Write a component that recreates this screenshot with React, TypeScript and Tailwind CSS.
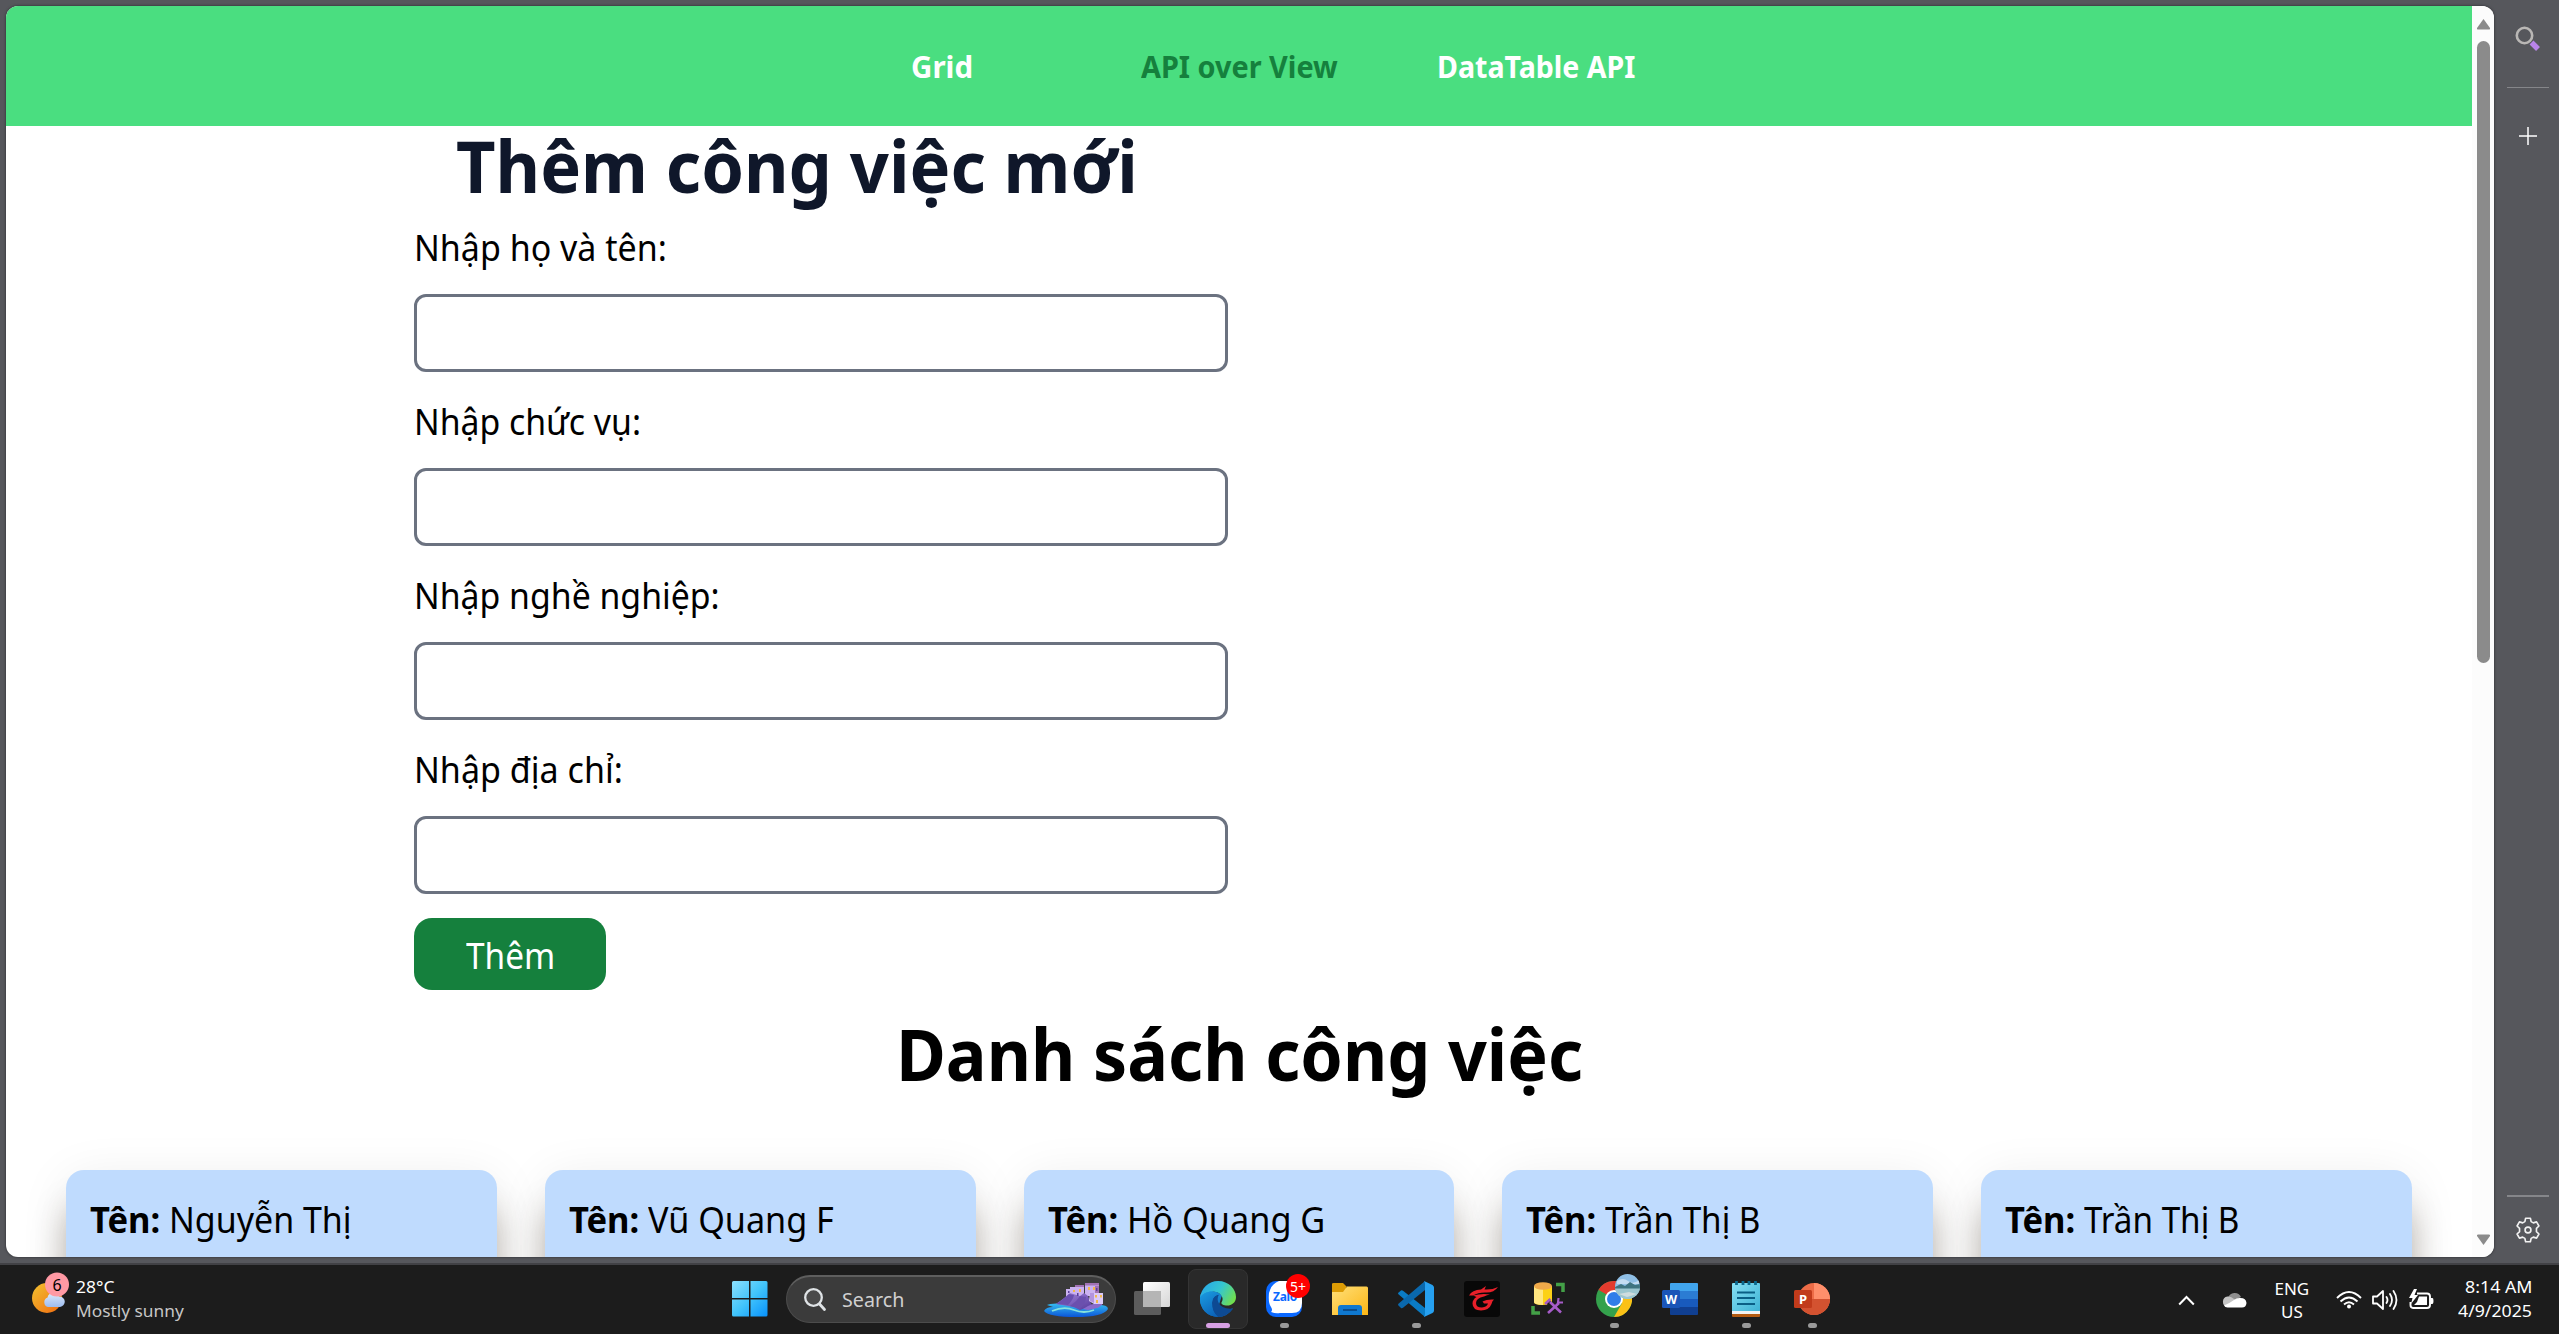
import React from "react";

const fields = [
  { label: "Nhập họ và tên:", w: 253 },
  { label: "Nhập chức vụ:", w: 227 },
  { label: "Nhập nghề nghiệp:", w: 306 },
  { label: "Nhập địa chỉ:", w: 209 },
];

const people = [
  { name: "Nguyễn Thị", w: 183 },
  { name: "Vũ Quang F", w: 186 },
  { name: "Hồ Quang G", w: 198 },
  { name: "Trần Thị B", w: 155 },
  { name: "Trần Thị B", w: 155 },
];

function Fit({ children, w, className = "" }: { children: string; w: number; className?: string }) {
  const ref = React.useRef<HTMLSpanElement>(null);
  const [s, setS] = React.useState(1);
  React.useLayoutEffect(() => {
    if (ref.current) setS(w / ref.current.offsetWidth);
  }, [w]);
  return (
    <span className={"inline-block whitespace-nowrap " + className} style={{ width: w }}>
      <span ref={ref} className="inline-block origin-left" style={{ transform: `scaleX(${s})` }}>
        {children}
      </span>
    </span>
  );
}

function Slot({ children, dot = false, active = false }: { children: React.ReactNode; dot?: boolean; active?: boolean }) {
  return (
    <div className={"relative flex h-[60px] w-[60px] items-center justify-center rounded-lg " + (active ? "border border-[#343434] bg-[#292929]" : "")}>
      {children}
      {dot && <div className="absolute bottom-[1px] h-[5px] w-[9px] rounded-full bg-[#9a9a9a]" />}
      {active && <div className="absolute bottom-0 h-[5px] w-[24px] rounded-full bg-[#d8a0e4]" />}
    </div>
  );
}

function Weather() {
  return (
    <svg width="40" height="44" viewBox="0 0 40 44">
      <defs>
        <linearGradient id="sun" x1="0" y1="0" x2="1" y2="1">
          <stop offset="0" stopColor="#f2c230" />
          <stop offset="1" stopColor="#f06a10" />
        </linearGradient>
        <linearGradient id="cl" x1="0" y1="0" x2="0" y2="1">
          <stop offset="0" stopColor="#dfeafb" />
          <stop offset="1" stopColor="#9dbdf0" />
        </linearGradient>
      </defs>
      <circle cx="16" cy="26" r="15" fill="url(#sun)" />
      <path d="M17 35a5 5 0 0 1-.5-9.500a6 6 0 0 1 11.500-1a5.200 5.200 0 1 1 1 10.500z" fill="url(#cl)" />
      <circle cx="26" cy="12.500" r="12" fill="#ff99a4" />
    </svg>
  );
}

function Windows() {
  return (
    <svg width="36" height="36" viewBox="0 0 36 36">
      <defs>
        <linearGradient id="win" gradientUnits="userSpaceOnUse" x1="0" y1="0" x2="36" y2="36">
          <stop offset="0" stopColor="#8be0fd" />
          <stop offset=".5" stopColor="#41c4fb" />
          <stop offset="1" stopColor="#0690fb" />
        </linearGradient>
      </defs>
      <path fill="url(#win)" d="M1.500 0H17v17H0V1.500Q0 0 1.500 0zM18.500 0H34Q35.500 0 35.500 1.500V17h-17zM0 18.500h17v17H1.500Q0 35.500 0 34zM18.500 18.500h17V34q0 1.500-1.500 1.500H18.500z" />
    </svg>
  );
}

function Village() {
  return (
    <svg width="64" height="36" viewBox="0 0 64 36">
      <defs>
        <linearGradient id="sea" x1="0" y1="0" x2="0" y2="1">
          <stop offset="0" stopColor="#35bdf0" />
          <stop offset="1" stopColor="#0b55d8" />
        </linearGradient>
        <linearGradient id="hill" x1="0" y1="0" x2="1" y2="1">
          <stop offset="0" stopColor="#a88be0" />
          <stop offset="1" stopColor="#54399a" />
        </linearGradient>
      </defs>
      <path d="M0 29Q2 25 9 25L3 23Q6 21 16 21.500L48 23Q64 22 64 27Q59 35 32 35Q5 35 0 29z" fill="url(#sea)" />
      <path d="M8 29Q20 24 30 28T50 28" stroke="#86e2dc" strokeWidth="1.800" fill="none" />
      <path d="M22 7h6v8h-6zM26 5h8v9h-8zM31 3h9v12h-9zM41 1h14v13H41z" fill="#cbb2f0" />
      <path d="M41 1h14v2.500H41zM51 3v8h4V3zM31 3h9v2h-9z" fill="#a272b4" />
      <path d="M12 22Q22 15 26 11L36 14L40 11L44 14L48 24L36 28L30 25L24 24z" fill="url(#hill)" />
      <path d="M12 22Q20 17 25 12L30 13Q29 18 24 23zM26 24Q34 18 36 14L42 15Q42 21 36 27z" fill="#6b50ae" />
      <path d="M39 27Q48 20 59 21Q58 26 44 28z" fill="#8a6bcc" />
      <path d="M46 11h13v11H50L45 19z" fill="#dccaf8" />
      <path d="M46 11h4v10l-4-2z" fill="#b394de" />
      <path d="M44 5h2v3h-2zM49 5h2v3h-2zM35 7h2v3h-2zM29 8h2v2h-2zM52 18h2v3h-2zM56 13h2v2.500h-2zM51 13h2v2.500h-2z" fill="#f3b94a" />
      <path d="M24 9h1.500v2H24zM33 11h1.500v3H33zM52 6h1.500v3H52z" fill="#5b3f9c" />
    </svg>
  );
}

function Edge() {
  return (
    <svg width="36" height="36" viewBox="0 0 36 36">
      <defs>
        <linearGradient id="ea" x1="0" y1=".3" x2="1" y2=".7">
          <stop offset="0" stopColor="#28a8e8" />
          <stop offset=".5" stopColor="#35c6cf" />
          <stop offset="1" stopColor="#74e048" />
        </linearGradient>
        <linearGradient id="eb" x1="0" y1="0" x2=".6" y2="1">
          <stop offset="0" stopColor="#1b9de2" />
          <stop offset="1" stopColor="#0c63b8" />
        </linearGradient>
      </defs>
      <path d="M0 17C0 10 6 9 12 10L22 14L19 24Q24 30 33 27.500Q27 36 18 36A18 18 0 0 1 0 17z" fill="url(#eb)" />
      <path d="M12 21Q13 14 19 13.500C15 20 20 29 33 27.500Q27 36 18 36Q11 31 12 21z" fill="#0d4a93" />
      <path d="M0 17C1 7 9 0 18 0C29 0 36 8 36 16C36 22 31 25 26 24.500C22 24 20.500 22.500 22 20.500C24 17 21 11 13 10.500C7 10.300 2 13 0 17z" fill="url(#ea)" />
      <path d="M0 17C2 13 7 10.300 13 10.500C18 10.800 21 13 22 16Q20 13 17 14Q12 16 12 22Q12 31 18 36A18 18 0 0 1 0 17z" fill="url(#eb)" />
    </svg>
  );
}

function Zalo() {
  return (
    <div className="relative h-9 w-9">
      <svg width="36" height="36" viewBox="0 0 36 36">
        <rect width="36" height="36" rx="10" fill="#0a68ff" />
        <path d="M13 0H26Q36 0 36 10V22Q36 32 26 32H14Q10 33 5 31Q7 29 5 26Q2 22 3 12Q5 3 13 0z" fill="#fff" />
      </svg>
      <span className="absolute left-[7px] top-[7px] text-[12px] font-bold leading-[18px] tracking-[-0.3px] text-[#0a68ff]">Zalo</span>
      <span className="absolute -right-[8px] -top-[7px] flex h-6 w-6 items-center justify-center rounded-full bg-[#ff0000] text-[14px] text-white">5+</span>
    </div>
  );
}

function Folder() {
  return (
    <svg width="36" height="34" viewBox="0 0 36 34">
      <defs>
        <linearGradient id="fo" x1="0" y1="0" x2="1" y2="1">
          <stop offset="0" stopColor="#ffe07a" />
          <stop offset="1" stopColor="#fcb615" />
        </linearGradient>
      </defs>
      <path d="M0 2Q0 1 1.500 1H11l4 4H0zM0 4h14v8H0z" fill="#dd9c05" />
      <path d="M0 10h11l4-5.500H34.500Q36 4.500 36 6V33H0z" fill="url(#fo)" />
      <path d="M6 33V26Q6 23 9 23H27Q30 23 30 26V33z" fill="#0f78cf" />
      <path d="M11 28H25" stroke="#083f78" strokeWidth="1.500" />
    </svg>
  );
}

function Code() {
  return (
    <svg width="36" height="36" viewBox="0 0 36 36">
      <path d="M0 12L3 9.500Q4 9 5 9.700L27 27V36L1 13.800Q0 13 0 12z" fill="#0a7bc4" />
      <path d="M0 24L3 27Q4 27.500 5 26.800L27 9V0L1 22.300Q0 23 0 24z" fill="#0a68ad" />
      <path d="M26 0L34.500 4Q36 5 36 6.500V29.500Q36 31 34.500 32L26 36Q27 35 27 33V3Q27 1 26 0z" fill="#26a0f0" />
    </svg>
  );
}

function Garena() {
  return (
    <svg width="36" height="36" viewBox="0 0 36 36">
      <rect width="36" height="36" rx="3" fill="#080808" />
      <path d="M5 14.500Q8 9 17 8.500L22 5L20.500 8.500Q28 9 34 6Q30 12 21 11.500Q14 11.500 9 14.500z" fill="#e8202a" />
      <path d="M9 14.500Q18 12 26 13.500Q23 14 20 15.500Q12 17 12 22Q12 26.500 18 26.500Q23 26 24 22.500L20 22.500L18.500 20.500Q23 18 30 18.500Q28 20 27.500 23Q25 29.500 17 29.500Q8.500 29 8.500 22.500Q8.500 18.500 12.500 16Z" fill="#e8202a" />
    </svg>
  );
}

function Sql() {
  return (
    <svg width="34" height="34" viewBox="0 0 34 34">
      <path d="M25 2.500H32V10M2 24V31H9" stroke="#43a047" strokeWidth="3.500" fill="none" />
      <path d="M3 4V20Q3 23 12 23Q21 23 21 20V4z" fill="#fcd116" />
      <path d="M3 4V20Q3 22.500 12 23V5z" fill="#ffe680" />
      <ellipse cx="12" cy="4" rx="9" ry="3.800" fill="#efa94a" />
      <path d="M16 31L29 19M16 19L29 31" stroke="#1c1c1c" strokeWidth="5" />
      <path d="M17 31L28 21M19 20L30 30.500M14 22L19.500 17" stroke="#a65cc8" strokeWidth="2.600" fill="none" />
      <path d="M27.500 16L27 20.500L32 20.500" stroke="#a65cc8" strokeWidth="2.200" fill="none" />
    </svg>
  );
}

function Chrome() {
  return (
    <div className="relative h-9 w-9">
      <svg width="36" height="36" viewBox="0 0 36 36">
        <circle cx="18" cy="18" r="18" fill="#34a14c" />
        <path d="M18 18L2.400 9A18 18 0 0 1 33.600 9z" fill="#e33b2e" />
        <path d="M18 9H33.600A18 18 0 0 1 18 36L25.800 22.500z" fill="#fbc116" />
        <path d="M2.400 9L10.200 22.500L18 18z" fill="#34a14c" />
        <circle cx="18" cy="18" r="9" fill="#fff" />
        <circle cx="18" cy="18" r="7" fill="#2f7de9" />
      </svg>
      <svg className="absolute -right-[8px] -top-[7px]" width="25" height="25" viewBox="0 0 25 25">
        <defs>
          <clipPath id="av"><circle cx="12.500" cy="12.500" r="12.500" /></clipPath>
        </defs>
        <g clipPath="url(#av)">
          <path d="M0 0H25V25H0z" fill="#8fbfe6" />
          <path d="M2 7Q8 3 13 7T24 6V10H2z" fill="#c3dcf1" />
          <path d="M0 13L6 10L10 12L15 8L20 11L25 10V15H0z" fill="#3f7480" />
          <path d="M0 14.500H25V25H0z" fill="#9cc6cf" />
          <path d="M4 20L14 18L22 20L12 23z" fill="#cfdcde" />
        </g>
      </svg>
    </div>
  );
}

function Word() {
  return (
    <svg width="36" height="32" viewBox="0 0 36 32">
      <path d="M8 1Q8 0 9 0H35Q36 0 36 1V8H8z" fill="#41a5ee" />
      <path d="M8 8H36V16H8z" fill="#2b7cd3" />
      <path d="M8 16H36V24H8z" fill="#185abd" />
      <path d="M8 24H36V31Q36 32 35 32H9Q8 32 8 31z" fill="#103f91" />
      <rect y="7" width="18" height="18" rx="1.500" fill="#1a55b8" />
      <text x="9" y="20.500" textAnchor="middle" fontSize="12.500" fontWeight="700" fill="#fff">W</text>
    </svg>
  );
}

function Notepad() {
  return (
    <svg width="28" height="36" viewBox="0 0 28 36">
      <defs>
        <linearGradient id="np" x1="0" y1="0" x2="1" y2="1">
          <stop offset="0" stopColor="#86e0f5" />
          <stop offset="1" stopColor="#3eb2d4" />
        </linearGradient>
      </defs>
      <path d="M0 28H28V35Q28 36 27 36H1Q0 36 0 35z" fill="#b35a10" />
      <path d="M0 28H28V33H0z" fill="#f2f2f2" />
      <path d="M0 3Q0 2 1 2H27Q28 2 28 3V30H0z" fill="url(#np)" />
      <path d="M5 11.500H23M5 17H23M5 23H23" stroke="#0a5f86" strokeWidth="2" />
      <path d="M4.500 0V4M11 0V4M17 0V4M23.500 0V4" stroke="#0b6a90" strokeWidth="2.800" />
    </svg>
  );
}

function PowerPoint() {
  return (
    <svg width="36" height="34" viewBox="0 0 36 34">
      <circle cx="20" cy="17" r="16" fill="#ed6c47" />
      <path d="M20 1A16 16 0 0 1 36 17H20z" fill="#ff8f6b" />
      <path d="M4 17H36A16 16 0 0 1 4 17z" fill="#d35230" />
      <rect y="8" width="18" height="18" rx="1.500" fill="#c13b1b" />
      <text x="9" y="21.500" textAnchor="middle" fontSize="13" fontWeight="700" fill="#fff">P</text>
    </svg>
  );
}

function SystemTray() {
  return (
    <div className="flex h-full items-center pt-px">
      <svg width="17" height="11" viewBox="0 0 17 11" className="mr-[27px]"><path d="M1.200 9.500L8.500 2L15.800 9.500" stroke="#fff" strokeWidth="2" fill="none" /></svg>
      <svg width="25" height="16" viewBox="0 0 25 16" className="mr-[27px]">
        <path d="M6 6A7 7 0 0 1 19 5L12 9z" fill="#8e8e8e" />
        <path d="M5.500 15A5.300 5.300 0 0 1 5.500 4.500Q9 4 12 7L18 10L12 15z" fill="#c4c4c4" />
        <path d="M2 13.500Q8 11 12 8Q15 5.500 18.500 6Q24 6 24.500 11Q24 15.500 20 15.500H5.500Q3 15.500 2 13.500z" fill="#fff" />
      </svg>
      <div className="mr-[26px] flex w-[36px] flex-col items-center text-[17px] leading-[23px]">
        <Fit w={35}>ENG</Fit>
        <Fit w={22}>US</Fit>
      </div>
      <svg width="26" height="20" viewBox="0 0 26 20" className="mr-[10px]" fill="none" stroke="#fff" strokeWidth="1.900">
        <path d="M1 8Q13-4 25 8M4.500 11.500Q13 3.500 21.500 11.500M8 14.500Q13 10 18 14.500" />
        <circle cx="13" cy="16.500" r="2" fill="#fff" stroke="none" />
      </svg>
      <svg width="26" height="22" viewBox="0 0 26 22" className="mr-[11px]" fill="none" stroke="#fff" strokeWidth="1.800" strokeLinejoin="round" strokeLinecap="round">
        <path d="M1 7.500H5L11 2V20L5 14.500H1zM14.500 8Q16.500 11 14.500 14M18 5Q22 11 18 17M21.500 2Q27.500 11 21.500 20" />
      </svg>
      <svg width="26" height="22" viewBox="0 0 26 22" className="mr-[24px]" fill="none" stroke="#fff" strokeWidth="1.900">
        <path d="M8 4.500H18Q21 4.500 21 7.500V16Q21 19 18 19H4Q1.500 19 1.500 16V13" />
        <path d="M10 7.500H18V16H5L8 13z" fill="#fff" stroke="none" />
        <path d="M21.500 9H23.500Q24.500 9 24.500 12T23.500 15H21.500z" fill="#fff" stroke="none" />
        <path d="M5 0L0 9H3.500L2 15L9 6H5.500L8 0z" fill="#fff" stroke="none" />
      </svg>
      <div className="flex w-[73px] flex-col items-end pb-[3px] text-[17px] leading-[24px]">
        <Fit w={67}>8:14 AM</Fit>
        <Fit w={74}>4/9/2025</Fit>
      </div>
    </div>
  );
}

function Taskbar() {
  return (
    <footer className="flex h-[71px] w-full shrink-0 border-t-2 border-[#414145] bg-[#1c1c1c] pl-[31px] pr-[27px] text-white">
      <div className="flex w-[701px] items-start pt-[7px]">
        <div className="relative">
          <Weather />
          <span className="absolute left-[14px] top-[1px] w-6 text-center text-[16px] leading-[24px] text-black">6</span>
        </div>
        <div className="ml-[5px] flex flex-col pt-[3px] text-[17px] leading-[24px]">
          <Fit w={38}>28°C</Fit>
          <Fit w={108} className="text-[#c6c6c6]">Mostly sunny</Fit>
        </div>
      </div>
      <div className="flex items-center pb-px">
        <Windows />
        <div className="ml-[18px] mr-[6px] flex h-12 w-[330px] items-center rounded-full border border-t-2 border-[#4c4c4c] border-t-[#5e5e5e] bg-[#3b3b3b] pl-[17px] pr-[7px]">
          <svg width="23" height="24" viewBox="0 0 23 24" fill="none" stroke="#dfe3e6" strokeLinecap="round">
            <circle cx="9.500" cy="9.500" r="8.300" strokeWidth="2.300" fill="#4a4a4a" />
            <path d="M15.500 16L20.500 21.500" strokeWidth="2.800" />
          </svg>
          <Fit w={62} className="ml-[15px] mr-auto text-[20px] text-[#d0d0d0]">Search</Fit>
          <Village />
        </div>
        <div className="flex gap-[6px]">
          <Slot>
            <svg width="36" height="34" viewBox="0 0 36 34">
              <defs>
                <linearGradient id="tv" x1="0" y1="0" x2="1" y2="1"><stop offset="0" stopColor="#fff" /><stop offset="1" stopColor="#d6d6d6" /></linearGradient>
              </defs>
              <rect y="9" width="27" height="24" rx="1.500" fill="#5c5c5c" />
              <rect x="9" width="27" height="25" rx="1.500" fill="url(#tv)" />
              <path d="M9 9H27V25H9z" fill="#b5b5b5" />
            </svg>
          </Slot>
          <Slot active><Edge /></Slot>
          <Slot dot><Zalo /></Slot>
          <Slot><Folder /></Slot>
          <Slot dot><Code /></Slot>
          <Slot><Garena /></Slot>
          <Slot><Sql /></Slot>
          <Slot dot><Chrome /></Slot>
          <Slot><Word /></Slot>
          <Slot dot><Notepad /></Slot>
          <Slot dot><PowerPoint /></Slot>
        </div>
      </div>
      <div className="ml-auto"><SystemTray /></div>
    </footer>
  );
}

function Scrollbar() {
  return (
    <div className="flex w-[22px] shrink-0 flex-col items-center bg-[#fcfcfc] pb-[11px] pt-[12px]">
      <svg width="15" height="12" viewBox="0 0 15 12"><path d="M7.500 1L14 10Q14.500 11.500 13 11.500H2Q.5 11.500 1 10z" fill="#8b8b8b" /></svg>
      <div className="mt-[11px] h-[622px] w-[13px] rounded-full bg-[#8b8b8b]" />
      <svg className="mt-auto" width="15" height="12" viewBox="0 0 15 12"><path d="M7.500 11L14 2Q14.500 .5 13 .5H2Q.5 .5 1 2z" fill="#8b8b8b" /></svg>
    </div>
  );
}

function Sidebar() {
  return (
    <aside className="flex flex-1 flex-col items-center pb-[14px] pl-0.5 pt-[20px]">
      <svg width="25" height="25" viewBox="0 0 25 25">
        <circle cx="9.500" cy="9.500" r="7.700" stroke="#b9b7b5" strokeWidth="2.600" fill="none" />
        <path d="M16.500 16.500L23 23" stroke="#b984ea" strokeWidth="5.500" />
      </svg>
      <div className="mt-[36px] h-px w-[42px] bg-[#85868a]" />
      <svg className="mt-[39px]" width="18" height="18" viewBox="0 0 18 18"><path d="M9 0V18M0 9H18" stroke="#fff" strokeWidth="1.500" /></svg>
      <div className="mt-auto h-[2px] w-[42px] bg-[#85868a]" />
      <svg className="mt-[20px]" width="26" height="26" viewBox="0 0 24 24" fill="none" stroke="#f2f2f2" strokeWidth="1.500" strokeLinejoin="round">
        <path d="M9.800 1.200h4.400l.7 3.100 2 1.100 3-.9 2.200 3.800-2.300 2.200v3l2.300 2.200-2.200 3.800-3-.9-2 1.100-.7 3.100H9.800l-.7-3.100-2-1.100-3 .9-2.200-3.800 2.300-2.200v-3L1.900 8.300l2.200-3.800 3 .9 2-1.100z" />
        <circle cx="12" cy="12" r="2.700" />
      </svg>
    </aside>
  );
}

export default function App() {
  return (
    <div className="flex h-[1334px] w-[2559px] flex-col overflow-hidden bg-[#56575c] font-['Noto_Sans','Open_Sans',sans-serif]">
      <div className="flex h-[1263px] pb-[6px] pl-[6px] pt-[6px]">
        <div className="flex w-[2488px] shrink-0 overflow-hidden rounded-[12px] bg-white shadow-[0_0_2px_1px_#404146]">
          <main className="flex h-[1251px] w-[2466px] shrink-0 flex-col overflow-hidden">
            <nav className="grid h-[120px] shrink-0 grid-cols-[297px_297px_297px] items-center justify-center bg-[#4ade80] pt-px text-[30px] font-bold text-white">
              <div className="text-center"><Fit w={62}>Grid</Fit></div>
              <div className="text-center text-[#15803d]"><Fit w={197}>API over View</Fit></div>
              <div className="text-center"><Fit w={198}>DataTable API</Fit></div>
            </nav>
            <form className="ml-[408px] flex w-[814px] shrink-0 flex-col items-start">
              <h1 className="ml-[42px] h-[99px] text-[72px] font-bold leading-[78px] text-[#0f172a]"><Fit w={682}>Thêm công việc mới</Fit></h1>
              {fields.map((f) => (
                <label key={f.label} className="flex h-[174px] w-full flex-col text-[36px] leading-[46px] text-black">
                  <Fit w={f.w}>{f.label}</Fit>
                  <input className="mt-[23px] h-[78px] w-full rounded-[12px] border-[3px] border-[#6b7280] bg-white px-4" />
                </label>
              ))}
              <button type="button" className="-mt-[3px] flex h-[72px] w-[192px] items-center justify-center rounded-[18px] bg-[#15803d] pt-1 text-[36px] text-white"><Fit w={89}>Thêm</Fit></button>
            </form>
            <h2 className="mt-[27px] h-[153px] shrink-0 text-center text-[72px] font-bold leading-[72px] text-black"><Fit w={687}>Danh sách công việc</Fit></h2>
            <section className="grid shrink-0 grid-cols-5 gap-[48px] px-[60px]">
              {people.map((p, i) => (
                <article key={i} className="h-[300px] rounded-[18px] bg-[#bfdbfe] px-6 pt-[26px] text-[36px] leading-[48px] text-black shadow-[0_38px_34px_-2px_rgba(60,45,25,0.38),0_8px_50px_rgba(0,0,0,0.08)]">
                  <Fit w={70} className="mr-[9px] font-bold">Tên:</Fit>
                  <Fit w={p.w}>{p.name}</Fit>
                </article>
              ))}
            </section>
          </main>
          <Scrollbar />
        </div>
        <Sidebar />
      </div>
      <Taskbar />
    </div>
  );
}
